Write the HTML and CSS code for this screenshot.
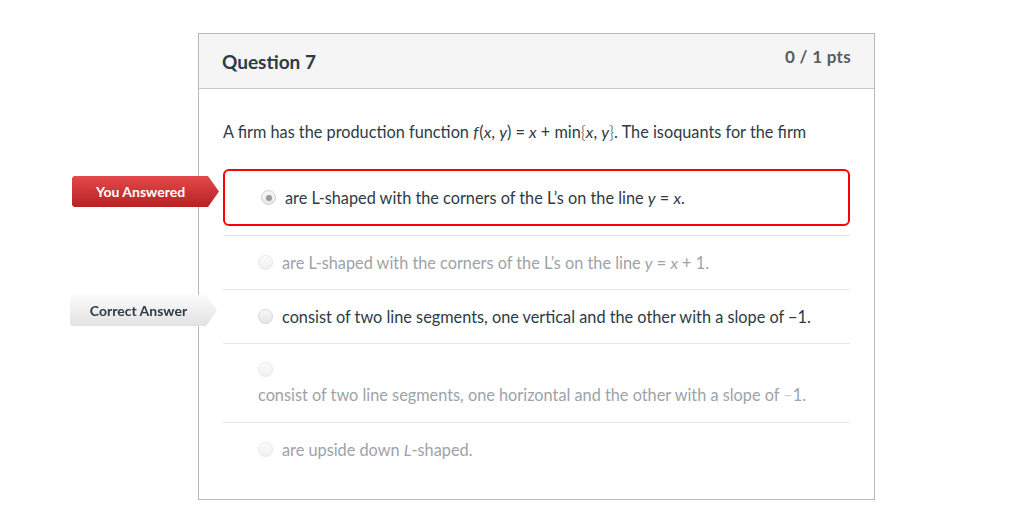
FILE: index.html
```html
<!DOCTYPE html>
<html>
<head>
<meta charset="utf-8">
<link rel="stylesheet" href="styles.css">
</head>
<body>
<div class="page">
  <div class="card">
    <div class="card-header">
      <h2 class="title">Question 7</h2>
      <div class="pts">0 / 1 pts</div>
    </div>
    <div class="card-body">
      <p class="question">A firm has the production function <i class="fn">f</i>(<i>x</i>, <i>y</i>) = <i>x</i> + min<span class="brace">{</span><i>x</i>, <i>y</i><span class="brace">}</span>. The isoquants for the firm</p>
      <div class="answers">
        <div class="answer selected">
          <span class="badge badge-wrong">You Answered</span>
          <span class="radio checked"></span>
          <span class="atext">are L-shaped with the corners of the L’s on the line <i>y</i> = <i>x</i>.</span>
        </div>
        <div class="answer muted">
          <span class="radio"></span>
          <span class="atext">are L-shaped with the corners of the L’s on the line <i>y</i> = <i>x</i> + 1.</span>
        </div>
        <div class="answer">
          <span class="badge badge-correct">Correct Answer</span>
          <span class="radio"></span>
          <span class="atext">consist of two line segments, one vertical and the other with a slope of −1.</span>
        </div>
        <div class="answer muted stacked">
          <span class="radio"></span>
          <span class="atext">consist of two line segments, one horizontal and the other with a slope of <span class="faint">−</span>1.</span>
        </div>
        <div class="answer muted">
          <span class="radio"></span>
          <span class="atext">are upside down <i>L</i>-shaped.</span>
        </div>
      </div>
    </div>
  </div>
</div>
</body>
</html>
```

FILE: styles.css
```css
html, body {
  margin: 0;
  padding: 0;
  background: #ffffff;
}
body {
  font-family: Lato, "Open Sans", "Liberation Sans", sans-serif;
  color: #2d3b45;
}
.page {
  padding: 33px 0 0 198px;
}
.card {
  width: 675px;
  height: 465px;
  border: 1px solid #b8b8b8;
  background: #fff;
}
.card-header {
  height: 54px;
  background: #f5f5f5;
  border-bottom: 1px solid #c7c7c7;
  display: flex;
  justify-content: space-between;
  padding: 0 23px 0 23px;
}
.title {
  margin: 0;
  font-size: 19px;
  font-weight: 700;
  line-height: 20px;
  padding-top: 18px;
  color: #2d3b45;
}
.pts {
  font-size: 17px;
  letter-spacing: 0.3px;
  font-weight: 700;
  line-height: 20px;
  padding-top: 13px;
  color: #555c61;
}
.card-body {
  padding: 0 24px;
}
.question {
  margin: 0;
  padding-top: 33px;
  font-size: 16.3px;
  line-height: 20px;
  height: 47px;
}
.fn {
  margin-right: 1px;
}
.brace {
  font-size: 17px;
  font-weight: 300;
}
.answers {
  position: relative;
}
.answer {
  position: relative;
  display: flex;
  align-items: center;
  height: 53px;
  border-top: 1px solid #e3e5e7;
  padding-left: 35px;
  font-size: 16.3px;
}
.answer.selected {
  height: 53px;
  border: 2px solid #ff0000;
  border-radius: 6px;
  padding-left: 36px;
  margin-bottom: 9px;
}
.answer.muted {
  color: #9da3a8;
}
.answer.stacked {
  height: 78px;
  flex-direction: column;
  align-items: flex-start;
  justify-content: flex-start;
}
.answer.stacked .radio {
  margin-top: 18px;
}
.answer.stacked .atext {
  margin-top: 8px;
}
.faint {
  color: #cfd3d6;
}
.radio {
  flex: none;
  width: 13px;
  height: 13px;
  border-radius: 50%;
  border: 1px solid #d6d6d6;
  background: linear-gradient(#f8f8f8, #e6e6e6);
  margin-right: 9px;
  position: relative;
}
.answer.muted .radio {
  border-color: #e6e6e6;
  background: linear-gradient(#fbfbfb, #f0f0f0);
}
.radio.checked {
  border-color: #cfcfcf;
}
.radio.checked::after {
  content: "";
  position: absolute;
  left: 3.5px;
  top: 3.5px;
  width: 6px;
  height: 6px;
  border-radius: 50%;
  background: #9a9a9a;
}
.answer .atext {
  line-height: 20px;
}
.badge {
  position: absolute;
  height: 31px;
  width: 147px;
  display: flex;
  align-items: center;
  justify-content: center;
  padding-right: 10px;
  box-sizing: border-box;
  font-size: 14px;
  font-weight: 700;
  clip-path: polygon(0 2px, 2px 0, 136px 0, 147px 15.5px, 136px 31px, 2px 31px, 0 29px);
}
.badge-wrong {
  left: -153px;
  top: 5px;
  color: #fff;
  background: linear-gradient(#e4494b, #b52224);
}
.badge-correct {
  left: -153px;
  top: 5px;
  color: #2d3b45;
  background: linear-gradient(#fbfbfb, #e2e2e2);
  filter: drop-shadow(0 0 0.7px #8a8a8a);
}
```
